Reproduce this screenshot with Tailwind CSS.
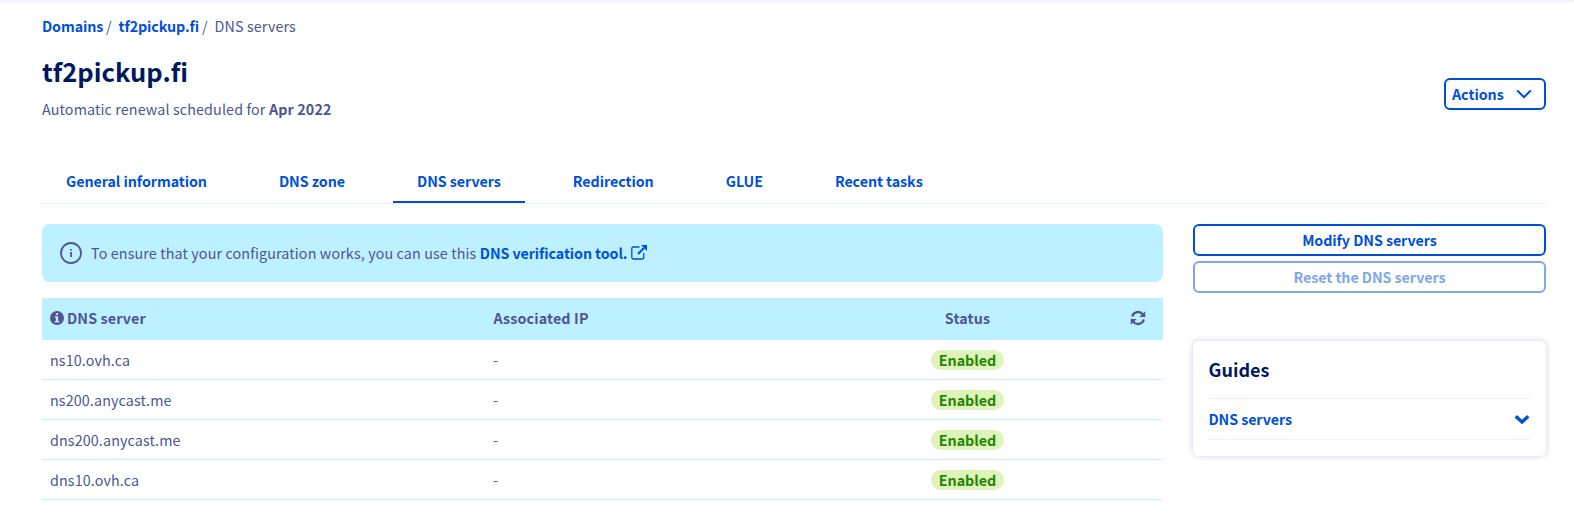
<!DOCTYPE html>
<html lang="en">
<head>
<meta charset="utf-8">
<title>tf2pickup.fi - DNS servers</title>
<script src="https://cdn.jsdelivr.net/npm/@tailwindcss/browser@4"></script>
</head>
<body class="h-[528px] overflow-hidden bg-white font-['Noto_Sans_CJK_SC','Noto_Sans',sans-serif] text-[14.3px] leading-6 tracking-[0.13px] text-[#4d5592]">
<div class="h-1 bg-linear-to-b from-[#f0f0fa] to-white"></div>
<main class="pl-[42px] pr-7">
  <header class="flex h-[159px] justify-between">
    <div>
      <nav class="mt-[10px] flex whitespace-pre">
        <a class="w-[62px] font-bold tracking-[-0.1px] text-[#0050d7]">Domains</a><span class="w-[14.5px] pl-[2px]">/</span>
        <a class="w-[81px] font-bold tracking-[-0.1px] text-[#0050d7]">tf2pickup.fi</a><span class="w-[15px] pl-[2.5px]">/</span>
        <span>DNS servers</span>
      </nav>
      <h1 class="mt-[17px] text-[25.5px] font-bold leading-8 tracking-[0.03px] text-[#00185e]">tf2pickup.fi</h1>
      <p class="mt-[10px]">Automatic renewal scheduled for <b>Apr 2022</b></p>
    </div>
    <button class="mt-[74px] flex h-8 w-[102px] items-center rounded-md border-2 border-[#0050d7] pl-1.5 font-bold tracking-[-0.05px] text-[#0050d7]">Actions
      <svg class="ml-3 size-4" viewBox="0 0 16 16" fill="none" stroke="currentColor" stroke-width="2" stroke-linecap="round" stroke-linejoin="round"><path d="M1.8 5 8 11.2 14.2 5"/></svg>
    </button>
  </header>
  <nav class="flex h-[41px] gap-6 border-b border-[#e4f2fa] font-bold tracking-[-0.07px] text-[#0050d7]">
    <a class="px-6 pt-[6px]">General information</a>
    <a class="px-6 pt-[6px]">DNS zone</a>
    <a class="border-b-2 border-[#0050d7] px-6 pt-[6px]">DNS servers</a>
    <a class="px-6 pt-[6px]">Redirection</a>
    <a class="px-6 pt-[6px]">GLUE</a>
    <a class="px-6 pt-[6px]">Recent tasks</a>
  </nav>
  <div class="mt-5 flex gap-[30px]">
    <section class="w-[1121px]">
      <div class="flex h-[58px] items-center rounded-lg bg-[#bef1ff] pl-[18px]">
        <svg class="size-[22px]" viewBox="0 0 22 22" fill="none" stroke="currentColor" stroke-width="1.8"><circle cx="11" cy="11" r="10"/><path d="M11 10v5M11 7v1.6"/></svg>
        <span class="ml-[9px]">To ensure that your configuration works, you can use this <a class="font-bold tracking-[-0.1px] text-[#0050d7]">DNS verification tool.</a></span>
        <svg class="ml-[3.5px] size-4 text-[#0050d7]" viewBox="0 0 16 16" fill="none" stroke="currentColor"><path d="M8.5 2H2.2Q.8 2 .8 3.4v9.2Q.8 14 2.2 14h9.2q1.4 0 1.4-1.4V8" stroke-width="1.3"/><path d="M7 9l6-6" stroke-width="2.2"/><path d="M10 0h6v6z" fill="currentColor" stroke="none"/></svg>
      </div>
      <table class="mt-4 w-full table-fixed border-separate border-spacing-0 text-left [&_tbody_td]:border-b [&_tbody_td]:border-[#bef1ff]">
        <colgroup><col class="w-[443px]"><col class="w-[394px]"><col class="w-[177px]"><col></colgroup>
        <thead><tr class="h-[42px] bg-[#bef1ff]">
          <th class="px-2 pt-0 pb-0.5"><span class="flex items-center gap-[3px]"><svg class="size-[14px]" viewBox="0 0 14 14"><circle cx="7" cy="7" r="7" fill="currentColor"/><path fill="#bef1ff" d="M5.9 2.2h2.2v1.9H5.9zM4.9 5.3h3.2v4.6h1.1v1.5H4.8V9.9h1.1V6.8h-1z"/></svg>DNS server</span></th>
          <th class="pt-0 pr-2 pb-0.5 pl-[8.5px]">Associated IP</th>
          <th class="px-2 pt-0 pb-0.5 text-center">Status</th>
          <th class="pt-0 pb-0.5 pl-[74px]"><svg class="size-4" viewBox="0 0 16 16" fill="none" stroke="currentColor" stroke-width="2.3"><path d="M2.2 6.6A6 6 0 0 1 12.8 4.4M13.8 9.4A6 6 0 0 1 3.2 11.6"/><path d="M15.2 1.2v5.7H9.3zM.8 14.8V9.1h5.9z" fill="currentColor" stroke="none"/></svg></th>
        </tr></thead>
        <tbody>
          <tr class="h-10"><td class="px-2 py-0">ns10.ovh.ca</td><td class="px-2 py-0">-</td><td class="py-0"><span class="mx-auto block h-5 w-[73px] rounded-full bg-[#ddf3b9] text-center font-bold leading-5 tracking-[-0.05px] text-[#268403]">Enabled</span></td><td></td></tr>
          <tr class="h-10"><td class="px-2 py-0">ns200.anycast.me</td><td class="px-2 py-0">-</td><td class="py-0"><span class="mx-auto block h-5 w-[73px] rounded-full bg-[#ddf3b9] text-center font-bold leading-5 tracking-[-0.05px] text-[#268403]">Enabled</span></td><td></td></tr>
          <tr class="h-10"><td class="px-2 py-0">dns200.anycast.me</td><td class="px-2 py-0">-</td><td class="py-0"><span class="mx-auto block h-5 w-[73px] rounded-full bg-[#ddf3b9] text-center font-bold leading-5 tracking-[-0.05px] text-[#268403]">Enabled</span></td><td></td></tr>
          <tr class="h-10"><td class="px-2 py-0">dns10.ovh.ca</td><td class="px-2 py-0">-</td><td class="py-0"><span class="mx-auto block h-5 w-[73px] rounded-full bg-[#ddf3b9] text-center font-bold leading-5 tracking-[-0.05px] text-[#268403]">Enabled</span></td><td></td></tr>
        </tbody>
      </table>
    </section>
    <aside class="w-[353px] tracking-[-0.1px]">
      <button class="flex h-8 w-full items-center justify-center rounded-md border-2 border-[#0050d7] font-bold tracking-[-0.08px] text-[#0050d7]">Modify DNS servers</button>
      <button class="mt-[5px] flex h-8 w-full items-center justify-center rounded-md border-2 border-[#7fa7eb] font-bold tracking-[-0.08px] text-[#7fa7eb]">Reset the DNS servers</button>
      <div class="mt-12 h-[115px] rounded-md bg-white pt-[16px] pr-4 pl-[15.5px] shadow-[0_0_6px_rgba(0,0,160,0.2)]">
        <h2 class="text-[18px] font-bold leading-6 tracking-[0.02px] text-[#00185e]">Guides</h2>
        <div class="mt-[17px] flex h-[42px] items-center justify-between border-y border-[#efeff1] font-bold text-[#0050d7]">DNS servers
          <svg class="size-4" viewBox="0 0 16 16" fill="none" stroke="currentColor" stroke-width="3.4"><path d="M1.7 5.3 8 11l6.3-5.7"/></svg>
        </div>
      </div>
    </aside>
  </div>
</main>
</body>
</html>
